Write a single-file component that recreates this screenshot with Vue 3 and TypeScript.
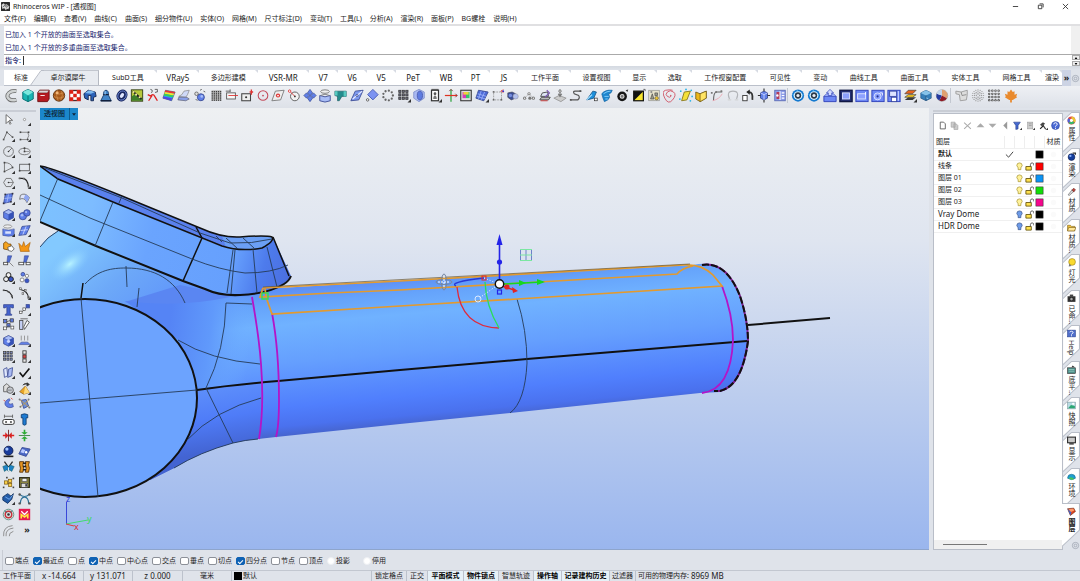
<script setup lang="ts">
import { ref } from 'vue'

interface Tab { label: string; size: number; active?: boolean }
interface Layer { name: string; color: string; current?: boolean; lamp?: 'on' | 'off' }
interface Snap { label: string; on: boolean; round?: boolean }
interface Cell { label: string; size: number; on?: boolean }

const K = '#333'
const B = '#5f7fe8'
const D = '#3a4a92'
const L = '#a9bdf6'

const P = (d: string, fill = 'none', stroke = 'none', w = 1) =>
  `<path d="${d}" fill="${fill}" stroke="${stroke}" stroke-width="${w}"/>`
const C = (x: number, y: number, r: number, fill = 'none', stroke = 'none', w = 1) =>
  `<circle cx="${x}" cy="${y}" r="${r}" fill="${fill}" stroke="${stroke}" stroke-width="${w}"/>`
const R = (x: number, y: number, w: number, h: number, fill = 'none', stroke = 'none', sw = 1) =>
  `<rect x="${x}" y="${y}" width="${w}" height="${h}" fill="${fill}" stroke="${stroke}" stroke-width="${sw}"/>`
const dots = (pts: number[][], r: number, fill: string) => pts.map(([x, y]) => C(x, y, r, fill)).join('')
const boxes = (pts: number[][], s: number, fill: string, stroke = 'none') => pts.map(([x, y]) => R(x, y, s, s, fill, stroke, 0.8)).join('')
const lattice = (from: number, step: number, n: number) => {
  const out: number[][] = []
  for (let i = 0; i < n; i++) for (let j = 0; j < n; j++) out.push([from + i * step, from + j * step])
  return out
}
const ring = (n: number, r: number) => Array.from({ length: n }, (_, i) => [8 + r * Math.cos((i * 2 * Math.PI) / n), 8 + r * Math.sin((i * 2 * Math.PI) / n)])
const more = P('M16 12v4h-4z', K)
const cube = P('M2 5l6-3 6 3v7l-6 3-6-3z', B, D) + P('M2 5l6 3 6-3-6-3z', L, D, 0.6) + P('M8 8v7l6-3V5z', '#3552b8')
const gear = C(8, 8, 7, '#1479cf') + C(8, 8, 5, '#d9f0ff') + C(8, 8, 3.6, '#2b3948') + C(8, 8, 1.8, '#e8eef5') + P('M2 7l2 1M12 8l2-1M7 2l1 2', 'none', '#7ed1ff')
const panel = R(1, 2, 14, 13, '#6d87f4', '#2a3db8')

const mainIcons: [string, string][] = [
  ['管', P('M13 3C5 2 2 7 3 10c2 4 6 4 10 3', 'none', '#666', 4.5) + P('M13 3C5 2 2 7 3 10c2 4 6 4 10 3', 'none', '#cfd2d2', 2.8)],
  ['多面体', P('M8 1l6 3v8l-6 3-6-3V4z', '#19b5b2', '#06686d') + P('M2 4l6 4 6-4-6-3z', '#7be8dd') + P('M8 8v7', 'none', '#06686d')],
  ['工具箱', P('M2 5l2-3h11v10l-2 3H2z', '#b51a20', '#6d1013') + P('M2 5l2-3h11l-2 3z', '#d9d9d9', '#6d1013', 0.6) + P('M5 8h5', 'none', '#fff')],
  ['球', C(8, 8, 6.5, '#a85a1c', '#5a2f0b') + P('M3 5q5 3 10 0M2 9q6 4 12 0M6 2q-2 6 1 12M11 3q2 5-1 10', 'none', '#dd9a58', 0.7) + C(6, 5, 1.6, '#f2b77a')],
  ['棋盘', R(2, 2, 12, 12, '#fff', '#a00') + boxes([[2, 2], [10, 2], [6, 6], [2, 10], [10, 10]], 4, '#dc1f12') + R(6, 2, 4, 1, '#222') + R(6, 13, 4, 1, '#222')],
  ['块面', P('M1 6l5-4 8 2 1 5-3 1v4H9V8H6v5l-4-2z', '#2b62b8', '#14254f') + P('M2 5l5-3 7 2-5 2z', '#7fbaf0')],
  ['锥体', P('M5 8q0-6 3-6t3 6l3 6H2z', '#4285c8', '#173b6c') + P('M5 7h6M2 14h12', 'none', '#0f1f3d', 1.6) + P('M7 3v4', 'none', '#b5dcff')],
  ['圆环', '<g transform="rotate(35 8 8)"><ellipse cx="8" cy="8" rx="4" ry="5" fill="#dfe6ff" stroke="#1a2860" stroke-width="4"/><ellipse cx="8" cy="8" rx="4.500" ry="5.500" fill="none" stroke="#6f8ad6"/></g>'],
  ['纹理', R(1.5, 1.5, 13, 13, '#b6c83b', '#2d3a10') + P('M2 9l4-3 5 4 3 1v3H2z', '#3f7f2b') + P('M3 3l10 9', 'none', '#222', 2) + dots([[4, 4], [7, 7], [11, 10]], 1.2, '#f5ef9b')],
  ['修剪', P('M5 9q3-4 5 0l3 5M7 8l-4 6M2 7l4 2', 'none', '#d22', 1.5) + P('M5 1q3 0 2 3l-1 1M10 1h3v3h-2v1', 'none', '#555')],
  ['彩色', P('M4 2l11 2-4 10L1 11z', '#21a0ff', '#444', 0.6) + P('M4 2l11 2-1 2L3 4z', '#e33') + P('M3 4l11 2-1 2L3 6z', '#f7e52b') + P('M2.5 6L13 8l-1 2-10-2z', '#3bd14d') + P('M1.5 9l10 2-1 3L1 11z', '#5546e0')],
  ['曲面', P('M2 9q4-1 6-6l6-1q-2 6-4 8z', '#cfd9f8', '#777', 0.7) + P('M2 10h8q2 0 4 2l-4 2-9-1z', '#8aa0e8', '#556', 0.7)],
  ['联集', C(9, 10, 4, B, D) + C(4, 6, 2, '#ddd', '#666') + P('M8 2l2-1M12 3l2 1M3 12l2 2', 'none', '#555') + C(10, 9, 1.5, L)],
  ['网点', R(3, 2, 11, 12, '#bbb') + boxes(lattice(3, 2.4, 5), 1.4, '#2c2c2c')],
  ['标尺', R(3, 5, 10, 7, '#f7f7f7', '#555') + P('M5 8h11', 'none', '#d33') + P('M2 3h5M7 1v3', 'none', '#555')],
  ['拉伸', R(2, 6, 10, 8, '#eee', '#444', 1.2) + C(7, 10, 1.2, '#333') + P('M13 1v6M11 4h4', 'none', '#d33', 1.5)],
  ['圆', C(8, 8, 5.5, 'none', '#c34a5a', 1.2) + C(8, 8, 1, '#c34a5a')],
  ['菱形', P('M5 3l10-1-4 11-10 1z', '#eee', '#777') + C(8, 8, 2.4, '#d33') + C(8, 8, 1, '#fff')],
  ['半径', C(9, 9, 5, '#f2f2f2', '#555') + P('M3 3l6 6', 'none', '#d33') + C(3, 3, 1.4, '#fff', '#d33') + C(9, 9, 1, '#333')],
  ['阵列', P('M8 1l3 4-3 3-3-3zM8 8l3 3-3 4-3-4zM4 5l3 3-3 3-3-3zM12 5l3 3-3 3-3-3z', B, D, 0.8)],
  ['放样', P('M2 8v6q6 3 12 0V8q-6 3-12 0z', L, D) + '<ellipse cx="8" cy="3.500" rx="5" ry="2" fill="#eee" stroke="#777"/>' + P('M3 8q5-3 10 0', 'none', '#777')],
  ['接管', P('M1 3h13v6H9l-3 5H4V9L1 8z', '#258c8d', '#0b4850', 0.6) + P('M1 3h3v5H1zM11 3h3v6h-3z', '#58c9c0')],
  ['平面', P('M6 3l9-1-5 11-9 1z', '#7f9bf0', D) + P('M3 12L14 3', 'none', '#eef', 1.2) + C(8, 8, 1.2, '#fff', D)],
  ['旋转面', P('M9 1l6 6-6 6-6-6z', '#7c93f2', '#4357b0') + C(3, 13, 1.4, '#fff', '#555')],
  ['环形阵列', dots(ring(9, 5.6), 1.3, '#666')],
  ['矩形阵列', boxes([[2, 2], [6, 2], [10, 2], [2, 6], [6, 6], [10, 6], [2, 10], [6, 10], [10, 10]], 2.6, '#667', '#333') + more],
  ['圆柱', P('M2 4l6-3 6 3v7l-6 4-6-4z', '#a9b9f2', '#8494cc') + '<ellipse cx="9" cy="8" rx="3" ry="5" fill="#5e7be0" stroke="#4a5cae"/>'],
  ['人台', R(4, 2, 8, 12, '#fff', '#333', 1.4) + C(8, 6, 1.6, '#555') + P('M6 12q0-4 2-4t2 4z', '#777') + P('M4 1h8', 'none', '#444') + more],
  ['坐标轴', P('M8 1v14', 'none', '#2aa13a', 1.4) + P('M1 8h14', 'none', '#d32', 1.4) + P('M6 3l2-2 2 2M13 6l2 2-2 2', 'none', '#733')],
  ['显示器', R(2, 2, 12, 12, '#ddd', '#333', 1.2) + R(4, 4, 4, 7, '#d63ab8') + R(8, 4, 4, 7, '#31c56b') + R(5, 4, 6, 3, '#f0d23a')],
  ['网格面', P('M4 2l11 2-5 10-9-3z', '#4e6bd8', D) + P('M3 6l10 3M2 9l10 3M7 3L4 12M11 4L7 13', 'none', '#a7bbff', 0.8) + more],
  ['控制点', '<path d="M3 4h9v9H3z" fill="none" stroke="#999" stroke-dasharray="2 1"/>' + boxes([[2, 3], [2, 12], [11, 12]], 1.8, '#666') + P('M11 4l3-3M12 2l2 3', 'none', '#d33') + C(14, 3, 1, '#33c')],
  ['渐变体', P('M2 5l5-1 4 2v5l-5 2-4-3z', '#3c4f97', '#445', 0.7) + C(11, 9, 3, '#b4c2ef', '#99a', 0.7) + C(5, 8, 2, '#768de0')],
  ['节点', P('M2 12l6-6 5 5', 'none', '#bbb') + dots([[3, 11], [8, 6], [13, 11], [9, 11]], 1.8, '#777') + dots([[3, 11], [8, 6], [13, 11]], 0.8, '#fff')],
  ['图层笔', P('M2 13h10l2-3H4z', '#bbb', '#444') + P('M3 9h9l-1-5-6 1z', '#dfe6f5', '#444') + P('M3 14h8', 'none', '#c33') + P('M10 2l3 3-5 5', 'none', '#7a5ab0', 1.4)],
  ['投影', P('M1 11l6-3 8 3-6 4z', '#ccc', '#999') + P('M8 1v7M6 6l2 3 2-3', 'none', '#777', 1.3) + C(8, 3, 1.4, '#ddd', '#777')],
  ['曲线', P('M14 3H7Q4 3 6 6l5 2q2 3-1 5H2', 'none', '#555', 1.4) + boxes([[12, 2], [1, 12]], 2, '#555')],
  ['斜管', P('M2 13l7-10 4 1-3 7z', '#1c90dc', '#1a5b8e') + P('M2 13l6-6', 'none', '#a6e0ff', 1.4) + boxes([[11, 11]], 3, '#fff', '#333')],
  ['螺旋面', P('M2 6q4-5 12-4-1 4-4 4l1 4-2 3-4 2-2-5z', '#1d86ce', '#14609d', 0.7) + P('M4 6q4-3 8-3M5 9h5M6 12h3', 'none', '#8bd4ff')],
  ['黑球', C(7, 9, 5.5, '#151515') + C(7, 9, 2.2, '#777', '#ddd', 1.2) + P('M11 2l3-1-1 3z', '#333')],
  ['明暗', R(2, 3, 11, 11, '#f8e52e', '#111', 1.4) + P('M2 14V3h11z', '#111') + P('M13 1h2v2', 'none', '#555')],
  ['群组', R(2, 2, 12, 12, '#e6e2cc', '#888', 0.7) + P('M4 12l2-6 2 6zM9 5h3v3H9z', '#9a9a8c', '#444', 0.7) + C(11, 11, 2, '#eec332', '#554', 0.7) + C(5, 4, 1.2, '#888')],
  ['螺旋线', P('M8 8q2-1 1 1t-4 0 0-5 7 0-1 9-9-2 1-9 8 0', 'none', '#cf4f60')],
  ['黄平面', P('M6 4l7-1-4 10-6 1z', '#f5e13a', '#86761c') + dots([[2, 3], [14, 2], [15, 9], [1, 12], [13, 14], [8, 1]], 1, '#27b4e8')],
  ['黄盒', P('M2 4l5 2 7-3v8l-7 4-5-3z', '#edb719', '#5d4708', 0.8) + P('M7 6v9l7-4V3z', '#ffe463', '#5d4708', 0.7)],
  ['延伸曲线', P('M4 14q0-9 3-10h7', 'none', '#666', 1.2) + P('M3 14q8-2 11-8', 'none', '#eaa6b0') + boxes([[1, 4], [12, 2], [6, 3]], 2, '#777')],
  ['圆弧', P('M4 12Q0 3 8 3t4 9', 'none', '#b2b4b8', 1.2) + P('M2 13h4M10 13h4', 'none', '#ccc')],
  ['回转', P('M9 4q5 0 4 9', 'none', '#333', 2) + P('M10 1v6L6 4z', '#222') + R(2, 8, 5, 6, '#fff', '#333')],
  ['移动体', P('M4 5l4-2 4 2v6l-4 2-4-2z', B, D) + P('M4 5l4 2 4-2M8 7v6', 'none', '#cad5ff') + P('M8 0v3M1 8h3M12 8h3M8 13v3', 'none', '#333', 1.3)],
  ['反转', R(2, 2, 12, 12, '#8d9eea', '#5a6ab4') + R(4, 4, 4, 8, '#b33b5b') + P('M8 3v10M10 5h3M10 8h3M10 11h3', 'none', '#fff', 1.2) + C(5, 8, 1.4, '#fff')],
]
const bodyIcons: [string, string][] = [
  ['设定', gear], ['选项', gear],
  ['挤出', P('M1 9h14v6H1z', '#6d87f4', '#2a3db8') + P('M1 9l3-3h8l3 3z', '#a7b8fc', '#2a3db8', 0.7) + P('M8 1l4 4h-2v3H6V5H4z', '#d3dbff', '#2a3db8', 0.8)],
  ['框', R(1, 2, 14, 13, '#232f72', '#101744', 1.5) + R(4, 5, 8, 7, '#8ca0fb', '#dde4ff')],
  ['槽', panel + R(3, 6, 9, 6, '#8da1ff', '#e2e8ff') + P('M12 4v3', 'none', '#fff')],
  ['孔', panel + C(7.5, 9, 4, '#8da1ff', '#e2e8ff') + C(7.5, 9, 1.2, '#25338d') + P('M10 5h3v3', 'none', '#fff')],
  ['保存', panel + R(3, 3, 8, 6, '#dce3ff', '#3646a2') + R(5, 10, 6, 5, '#fff', '#3646a2') + P('M13 3v11', 'none', '#dce3ff')],
  ['堆叠', P('M2 13h9l4-3H6z', '#3c3c3c') + P('M2 10h9l4-3H6z', '#f4c521', '#333', 0.7) + P('M2 6h9l4-4H6z', '#e7621d', '#333', 0.7) + more],
  ['晶体', P('M8 2l6 3v6l-6 3-6-3V5z', '#367eb9', '#25527d', 0.7) + P('M2 5l6 3 6-3-6-3zM8 9l3 3H8z', '#86c2e9') + P('M8 8v6', 'none', '#25527d')],
  ['色球', C(8, 8, 6.5, '#f4f4f4', '#777', 0.6) + P('M8 8L8 1.5A6.5 6.5 0 0 1 13.6 11z', '#e0a070') + P('M8 8l5.6 3A6.5 6.5 0 0 1 5 13.8z', '#8e1b26') + P('M8 8L5 13.8A6.5 6.5 0 0 1 2 6z', '#253ba0') + P('M8 8L2 6a6.5 6.5 0 0 1 6-4.5z', '#c3d6ec')],
]
const extraIcons: [string, string][] = [
  ['展平', P('M1 3l6 1 7-2v5l-1 6-7 1-1-7-4-1z', '#ddd', '#999') + P('M7 4l1 4 5-1', 'none', '#888')],
  ['点云', dots(ring(16, 6.4), 0.7, '#999') + dots(ring(12, 4.2), 0.7, '#888') + dots(ring(6, 2), 0.7, '#888')],
  ['点格', dots(lattice(2.5, 3.6, 4), 1.35, '#555') + dots(lattice(2.5, 3.6, 4), 0.5, '#fff')],
  ['枫叶', P('M8 1l2 3 2-1v4l3-1-1 3 1 1-5 3H9v3H7v-3H6l-5-3 1-1-1-3 3 1V3l2 1z', '#e98a2d')],
]

const sideIcons: [string, string][] = [
  ['选取', P('M5 2v11l3-3 2 4 1-1-2-4h4z', '#fff', '#555')],
  ['点', C(8, 8, 1.4, '#fff', '#888') + more],
  ['多重直线', P('M2 13L6 4l7 6', 'none', '#555') + boxes([[1, 12], [5, 3], [12, 9]], 2, '#555') + more],
  ['控制点曲线', P('M3 4h9q3 4-1 9H3', 'none', '#777') + boxes([[2, 3], [12, 3], [2, 12], [11, 12]], 2, '#444') + more],
  ['圆', C(8, 8, 6, 'none', '#666') + P('M8 8l4-4', 'none', '#555') + C(8, 8, 1, '#333') + more],
  ['椭圆', '<ellipse cx="8" cy="8" rx="7" ry="4" fill="none" stroke="#666"/>' + P('M8 3v5h6', 'none', '#888') + boxes([[7, 3], [7, 7]], 2, '#444') + more],
  ['圆弧', P('M3 2v11l10-5M3 2q8 0 10 6', 'none', '#666') + boxes([[2, 1], [2, 12], [12, 7]], 2, '#444') + more],
  ['矩形', R(2, 4, 12, 8, 'none', '#555') + boxes([[1, 11], [13, 3]], 2, '#444') + more],
  ['多边形', P('M5 3h6l3 5-3 5H5L2 8z', 'none', '#666') + P('M8 8h6', 'none', '#777') + C(8, 8, 1, '#333') + more],
  ['圆角', P('M1 3h4q7 0 8 11', 'none', '#222', 1.5) + boxes([[1, 2], [6, 2], [12, 12]], 2, '#666') + more],
  ['曲面', P('M4 3l9-1-2 10-9 2z', B, D) + P('M3 8l9-1M8 3L6 13', 'none', L) + boxes([[3, 2], [12, 1], [1, 13], [10, 11]], 2, '#334') + more],
  ['弯曲面', P('M3 4q6-4 11 3l-3 6Q8 6 2 9z', '#dfe5f8', '#666') + P('M9 3q4 1 5 4l-3 6Q10 9 7 8z', '#8fa6f1') + more],
  ['立方体', cube + more],
  ['球体', C(6, 10, 4.5, B, D) + C(11, 6, 4, '#5672dc', D) + C(5, 9, 1.6, L) + C(10, 5, 1.4, L) + more],
  ['管状', P('M1 6v8q7 2 14 0V6q-7 3-14 0z', B, D, 0.7) + '<ellipse cx="7" cy="3" rx="5" ry="2" fill="#eee" stroke="#888"/>' + P('M4 9h7v3H4z', '#dbe3fd') + more],
  ['网格', P('M5 3l10-1-5 11-9 1z', B, D) + P('M3 8l9-1M10 3L6 13', 'none', '#d6dfff') + more],
  ['布尔', P('M2 4l3-2 3 3h3v4l-4 3-5-1z', '#f5a31e', '#7b4c0a') + P('M7 9l5-2 3 4-3 3-4-1z', '#fff', '#555')],
  ['爆炸', P('M1 4l4 4 2-6 2 6 6-5-2 8 1 3H3z', '#f59615', '#a8650f', 0.8)],
  ['修剪', P('M7 1h5l-3 8H6z', '#4c6bd5', D, 0.7) + R(2, 9, 5, 3, '#fff', '#444') + P('M9 9l5 5', 'none', '#777')],
  ['分割', P('M8 1h5l-3 8H7z', '#4c6bd5', D, 0.7) + R(1, 9, 6, 3, '#fff', '#444') + R(10, 9, 5, 3, '#fff', '#444')],
  ['交集', C(8, 5, 3, '#eee', '#222', 1.2) + C(5, 10, 3, '#eee', '#222', 1.2) + C(11, 10, 3, '#3955c5', '#222', 1.2) + more],
  ['三点', C(6, 4, 2.3, B, D) + C(11, 6, 2, '#fff', '#777') + C(5, 11, 2.4, '#fff', '#777') + C(11, 12, 2.5, '#3955c5', D)],
  ['曲线端点', P('M2 4q9 0 11 10', 'none', '#222', 1.4) + boxes([[1, 3], [7, 5], [11, 10]], 2, '#555')],
  ['编辑点', P('M3 3q9 2 10 10', 'none', '#222', 1.4) + boxes([[2, 1], [8, 3], [5, 7], [12, 12]], 2, '#fff', '#555') + more],
  ['文字', P('M2 2h12v4h-2l-1-1h-1v8l2 1v1H4v-1l2-1V5H5L4 6H2z', '#4463cf', D)],
  ['移动点', P('M4 12l6-6', 'none', '#777') + boxes([[2, 10], [6, 6]], 3, '#fff', '#444') + R(10, 2, 4, 4, '#3955c5', D) + more],
  ['散布', boxes([[2, 2], [10, 1], [6, 7]], 4, '#5c78dd', '#333') + boxes([[2, 11], [11, 10]], 3.5, '#fff', '#444') + P('M5 5l5-2M5 12l4-3', 'none', '#555')],
  ['旋转', R(2, 3, 4, 11, '#c5d0f5', '#444') + P('M8 14l6-9-3-2-4 8z', '#fff', '#444') + P('M3 1h9', 'none', '#555')],
  ['盒体', cube + C(8, 9, 2, '#c9d5ff') + more],
  ['投射', P('M1 13h14l-3-3H4z', B, D, 0.7) + P('M4 2v6M8 2v6M12 2v6', 'none', '#888') + more],
  ['矩阵', boxes([[2, 2], [6, 2], [10, 2], [2, 6], [6, 6], [10, 6], [2, 10], [6, 10], [10, 10]], 2.6, '#8090c8', '#333') + more],
  ['对齐', R(6, 1, 4, 4, '#e8e8e8', '#333') + R(6, 6, 4, 4, '#d44', '#333') + R(6, 11, 4, 4, '#e8e8e8', '#333') + more],
  ['偏移', P('M2 4l4-2 1 10-4 2z', '#dfe6fc', D) + P('M8 4l5-2-1 10-5 2z', '#a9baf3', D) + more],
  ['检查', P('M2 8l4 5L14 3', 'none', '#111', 2) + more],
  ['组合', P('M2 12V5l4-3 3 3v7z', '#ddd', '#555') + C(10, 10, 4, '#c4c8cf', '#555') + P('M7 10h5', 'none', '#777') + more],
  ['金字塔', P('M2 12l7-7 5 8-7 2z', '#e8a527', '#70450c', 0.7) + P('M9 5l5 8-7 2z', '#ffd978') + P('M6 4q1-3 6-2M11 1l3 2-3 2z', '#333', '#333') + more],
  ['弯曲', P('M9 2q-7 3-5 8 4 5 10 2l-1-4q-4 2-5-1 0-2 2-3z', B, D, 0.8) + P('M11 1l2 2M2 4l2 1', 'none', '#c33')],
  ['包络', P('M4 4l6-1 3 8-6 3z', '#6e90d7', D) + P('M2 3l12 10M3 12l10-8', 'none', '#c69a3d') + dots([[2, 3], [14, 13], [3, 12], [13, 3]], 1.2, '#777')],
  ['尺寸', P('M3 2v4M13 2v4M3 4h10', 'none', '#555') + '<rect x="1" y="8" width="14" height="6" rx="2" fill="#fff" stroke="#333" stroke-width="1.200"/>' + dots([[5, 11], [11, 11]], 1.3, '#555')],
  ['螺钉', P('M4 2q4-2 8 0v4h-2v8l-2 1-2-1V6H4z', '#1e7bd2', '#103b6d')],
  ['水平翻转', P('M1 7h3V4l4 4-4 4V9H1zM15 7h-3V4L8 8l4 4V9h3z', '#da2020') + P('M8 1v14', 'none', '#611')],
  ['垂直翻转', P('M7 1h2v3h3L8 7 4 4h3zM7 15h2v-3h3L8 9l-4 3h3z', '#2bab32') + P('M1 8h14', 'none', '#2b7a32')],
  ['渲染', C(8, 7, 5.5, '#173b9b', '#0a1648') + C(6, 5, 2, '#a6c6ff') + P('M2 14h12', 'none', '#222', 2)],
  ['贴图', P('M5 3l10 2-5 9-9-3z', '#4967c4', D) + P('M5 5l4 1-2 4-4-1z', '#b7c8ff') + C(10, 9, 1.5, '#fff')],
  ['剪切', P('M3 2l5 7M13 2L8 9', 'none', '#333', 1.6) + P('M1 8l5-2 2 3 2-3 5 2-3 6-3-2-1 2-2-2-3 2z', '#1e82c4', '#155', 0.6) + P('M8 9v5', 'none', '#fff')],
  ['缝合', P('M2 2h5l-1 4 1 4-1 5H2l1-5-1-4zM9 2h5l-1 4 1 4-1 5H9l1-5-1-4z', '#e49421', '#4d2a04') + P('M6 4h4M6 8h4M6 12h4', 'none', '#222', 1.6)],
  ['炸点', boxes([[3, 6], [8, 4], [8, 9]], 4, '#fbd24a', '#755107') + boxes([[1, 13], [5, 1], [13, 2], [13, 13]], 2, '#444')],
  ['存档', R(2, 2, 12, 12, '#8c8540', '#2c2a14', 1.4) + R(5, 3, 6, 4, '#eee', '#333', 0.7) + R(4, 9, 8, 5, '#ddd', '#333', 0.7) + R(9, 10, 2, 3, '#333')],
  ['折面', P('M1 6l6-4 4 3 3-3-2 7-5 5-6-4z', '#245ca7', '#12305d') + P('M4 6l5 3 4-5', 'none', '#7db7ff') + more],
  ['桥接', P('M2 3q6 5 12 0M3 14q0-7 5-8 5 1 5 8', 'none', '#2b7197', 1.3) + dots([[2, 3], [14, 3], [2, 14], [14, 14]], 1.5, '#555')],
  ['靶心', C(8, 8, 6.5, '#d8e5e5', '#587') + C(8, 8, 4, 'none', '#c8333b', 1.8) + C(8, 8, 1.6, '#333') + P('M3 3l3 3M13 3l-3 3', 'none', '#478')],
  ['插件', R(1, 1, 14, 14, '#e41850') + P('M4 13V8l4 3 4-3v5', 'none', '#ffe73c', 2) + P('M4 4l4 4 4-4', 'none', '#fff', 1.6)],
  ['同心弧', P('M2 15Q1 3 13 2M5 15Q4 6 14 5M9 15q-1-4 5-6', 'none', '#888', 1.1)],
]

const layerTools: [string, string][] = [
  ['新建', P('M4 2h6l3 3v9H4z', '#fff', '#555', 1.5)],
  ['复制', P('M2 2h7v9H2zM7 5h4l3 3v7H7z', '#ccc', '#999')],
  ['删除', P('M2 3l12 11M14 3L2 14', 'none', '#aaa', 1.8)],
  ['上移', P('M8 4l7 7H1z', '#aaa')],
  ['下移', P('M8 12l7-7H1z', '#aaa')],
  ['左移', P('M4 8l7-7v14z', '#999')],
  ['过滤', P('M1 2h12L9 8v6l-4 1V8z', '#4568ce', '#223d89') + more],
  ['报告', R(3, 2, 9, 12, '#ccc', '#999') + P('M5 5h5M5 8h5', 'none', '#888') + more],
  ['工具', P('M2 6l5-4 4 3-3 2 5 7-2 1-5-7-2 1z', '#444') + P('M8 8l-6 6', 'none', '#222', 2) + more],
  ['帮助', C(8, 8, 7, '#4968d4', '#2a439b') + P('M5 6q0-3 3-3t3 3q0 1-3 3v1M8 12v2', 'none', '#fff', 1.7)],
]

const sideTabs: { label: string; icon: string; active?: boolean }[] = [
  { label: '属性', icon: C(8, 8, 5, 'none', '#e24a4a', 4) + P('M8 3a5 5 0 0 1 4.4 7.4', 'none', '#e8ca2f', 4) + P('M12 10.5A5 5 0 0 1 4 11', 'none', '#38b768', 4) + P('M4 11A5 5 0 0 1 4 5', 'none', '#4a67da', 4) },
  { label: '渲染', icon: C(8, 9, 6, '#163e9c', '#081744') + C(6, 7, 2, '#8ab2ff') + P('M10 2h5v3', 'none', '#333', 2) },
  { label: '材质', icon: P('M2 14l7-9 3 3-8 7z', '#ddd', '#555') + P('M9 5l3-3 3 3-3 4z', '#b94037', '#622') },
  { label: '材质…', icon: P('M1 4h5l2 2h6v8H1z', '#eebf37', '#76580e') + P('M3 8h13l-3 6H1z', '#ffe79a', '#76580e') },
  { label: '灯光', icon: C(9, 7, 6, '#f9d92e', '#92771a') + P('M4 10l4 4-5 1z', '#777') },
  { label: '已命…', icon: R(1, 4, 14, 10, '#333') + R(5, 1, 6, 4, '#444') + C(8, 9, 3, '#aaa', '#111') },
  { label: 'Help', icon: R(1, 2, 14, 12, '#4f6ecb', '#273e8d') + P('M5 6q0-2 3-2t3 3l-3 2v1M8 11v2', 'none', '#fff', 1.5) },
  { label: '底平…', icon: R(1, 5, 14, 10, '#4c8e88', '#222') + P('M3 8h10M3 11h10', 'none', '#b4e7dc') + P('M10 1l4 3h-6z', '#333') },
  { label: '快照', icon: R(1, 2, 14, 12, '#b9dbe4', '#7b969d') + P('M2 13l5-6 7 2v4z', '#2ca774') + C(11, 5, 2, '#fff') },
  { label: '显示', icon: R(1, 2, 14, 10, '#c9c9c9', '#333', 2) + P('M4 14h8', 'none', '#333', 2.5) },
  { label: '环境', icon: P('M1 11a7 7 0 0 1 14 0q-7 5-14 0z', '#1e9fd0', '#166689') + P('M3 11q5-4 10 2-5 2-10-2z', '#48c657') },
  { label: '图层', active: true, icon: P('M1 3l11-1 3 6-9 7z', '#de421b', '#65210b') + P('M1 3l5 12 2-6z', '#4466c5') + P('M3 4l8-1 2 3-6 3z', '#ff9a6a') },
]

const menus = ['文件(F)', '编辑(E)', '查看(V)', '曲线(C)', '曲面(S)', '细分物件(U)', '实体(O)', '网格(M)', '尺寸标注(D)', '变动(T)', '工具(L)', '分析(A)', '渲染(R)', '面板(P)', 'BG螺栓', '说明(H)']

const tabs: Tab[] = [
  { label: '标准', size: 34 }, { label: '卓尔谟犀牛', size: 60, active: true }, { label: 'SubD工具', size: 58 }, { label: 'VRay5', size: 42 },
  { label: '多边形建模', size: 59 }, { label: 'VSR-MR', size: 51 }, { label: 'V7', size: 29 }, { label: 'V6', size: 29 }, { label: 'V5', size: 29 },
  { label: 'PeT', size: 35 }, { label: 'WB', size: 31 }, { label: 'PT', size: 28 }, { label: 'JS', size: 29 }, { label: '工作平面', size: 53 },
  { label: '设置视图', size: 50 }, { label: '显示', size: 36 }, { label: '选取', size: 35 }, { label: '工作视窗配置', size: 66 }, { label: '可见性', size: 44 },
  { label: '变动', size: 36 }, { label: '曲线工具', size: 51 }, { label: '曲面工具', size: 51 }, { label: '实体工具', size: 51 }, { label: '网格工具', size: 51 },
  { label: '渲染', size: 20 },
]

const layers: Layer[] = [
  { name: '默认', color: '#000000', current: true },
  { name: '线条', color: '#ff0000', lamp: 'on' },
  { name: '图层 01', color: '#0a93f5', lamp: 'on' },
  { name: '图层 02', color: '#14dc0a', lamp: 'on' },
  { name: '图层 03', color: '#f5058c', lamp: 'on' },
  { name: 'Vray Dome', color: '#000000', lamp: 'off' },
  { name: 'HDR Dome', color: '#000000', lamp: 'off' },
]

const snaps = ref<Snap[]>([
  { label: '端点', on: false }, { label: '最近点', on: true }, { label: '点', on: false }, { label: '中点', on: true },
  { label: '中心点', on: false }, { label: '交点', on: false }, { label: '垂点', on: false }, { label: '切点', on: false },
  { label: '四分点', on: true }, { label: '节点', on: false }, { label: '顶点', on: false },
  { label: '投影', on: false, round: true }, { label: '停用', on: false, round: true },
])

const readouts: Cell[] = [
  { label: '工作平面', size: 35 }, { label: 'x -14.664', size: 49 }, { label: 'y 131.071', size: 49 }, { label: 'z 0.000', size: 50 }, { label: '毫米', size: 49 },
]
const toggles: Cell[] = [
  { label: '锁定格点', size: 35 }, { label: '正交', size: 21 }, { label: '平面模式', size: 36, on: true }, { label: '物件锁点', size: 35, on: true },
  { label: '智慧轨迹', size: 35 }, { label: '操作轴', size: 28, on: true }, { label: '记录建构历史', size: 48, on: true }, { label: '过滤器', size: 26 },
]

const isLatin = (s: string) => /^[\x00-\x7f]+$/.test(s)
const command = ref('')
</script>

<template>
  <div class="app">
    <header class="title">
      <svg class="logo" viewBox="0 0 16 16"><rect width="16" height="16" rx="1" fill="#2b2b2b" /><path d="M1 5l4-3 2 3 3-1 5 4-2 5-3-1-1 3-3-4-4 1z" fill="#d8d8d8" /><path d="M3 9l4-3 3 4M8 6l5 2" stroke="#222" fill="none" /></svg>
      <h1>Rhinoceros WIP - [透视图]</h1>
      <div class="window-buttons">
        <button aria-label="最小化"><svg viewBox="0 0 8 8"><path d="M1 4h6" /></svg></button>
        <button aria-label="还原"><svg viewBox="0 0 8 8"><path d="M1.500 2.500h4v4h-4zM3 1h4v4" /></svg></button>
        <button aria-label="关闭"><svg viewBox="0 0 8 8"><path d="M1 1l6 6M7 1L1 7" /></svg></button>
      </div>
    </header>
    <nav class="menu"><button v-for="m in menus" :key="m">{{ m }}</button></nav>

    <section class="command">
      <div class="history">
        <p>已加入 1 个开放的曲面至选取集合。</p>
        <p>已加入 1 个开放的多重曲面至选取集合。</p>
      </div>
      <div class="prompt">
        <label for="cmd">指令:</label>
        <input id="cmd" v-model="command" type="text" autocomplete="off">
        <div class="spin"><button aria-label="上一条"><svg viewBox="0 0 4 3"><path d="M2 0l2 3H0z" /></svg></button><button aria-label="下一条"><svg viewBox="0 0 4 3"><path d="M2 3l2-3H0z" /></svg></button></div>
      </div>
    </section>

    <div class="tabbar">
      <div class="tabs" role="tablist">
        <button v-for="t in tabs" :key="t.label" role="tab" class="tab" :class="{ active: t.active, latin: isLatin(t.label) }" :style="{ flexGrow: t.size }">
          <svg v-if="t.active" class="slant" viewBox="0 0 14 16" preserveAspectRatio="none"><path class="blank" d="M0 0H14V16H0z" /><path class="fill" d="M0 16L11 1H14V16z" /><path class="edge" d="M0 16L11 .5H14" /></svg>
          <span>{{ t.label }}</span>
        </button>
      </div>
      <button class="overflow" aria-label="更多">»</button>
      <button class="gear" aria-label="设置"><svg viewBox="0 0 10 10"><circle cx="5" cy="5" r="3.500" /><circle cx="5" cy="5" r="1.500" /></svg></button>
    </div>

    <div class="toolbar" role="toolbar">
      <div class="group group-main"><button v-for="i in mainIcons" :key="i[0]" :aria-label="i[0]"><svg viewBox="0 0 16 16" v-html="i[1]" /></button></div>
      <div class="group group-body"><button v-for="i in bodyIcons" :key="i[0]" :aria-label="i[0]"><svg viewBox="0 0 16 16" v-html="i[1]" /></button></div>
      <div class="group group-extra"><button v-for="i in extraIcons" :key="i[0]" :aria-label="i[0]"><svg viewBox="0 0 16 16" v-html="i[1]" /></button></div>
    </div>

    <main class="workspace">
      <aside class="side">
        <div class="grip" />
        <div class="palette">
          <button v-for="i in sideIcons" :key="i[0]" :aria-label="i[0]"><svg viewBox="0 0 16 16" v-html="i[1]" /></button>
          <button class="next" aria-label="更多工具">»</button>
        </div>
      </aside>

      <section class="view">
        <svg class="scene" viewBox="40 108 889 441" preserveAspectRatio="xMidYMid slice" role="img" aria-label="模型">
          <defs>
            <linearGradient id="sky" x1="0" y1="0" x2="0" y2="1">
              <stop offset="0" stop-color="#eef0f2" /><stop offset=".3" stop-color="#dfe5f0" /><stop offset=".65" stop-color="#bccdee" /><stop offset="1" stop-color="#9ab6ee" />
            </linearGradient>
            <linearGradient id="tube" gradientUnits="userSpaceOnUse" x1="390" y1="280" x2="403" y2="426">
              <stop offset="0" stop-color="#5d8ff6" /><stop offset=".1" stop-color="#65a3fb" /><stop offset=".24" stop-color="#70b2ff" /><stop offset=".5" stop-color="#659ffe" /><stop offset=".8" stop-color="#507ffd" /><stop offset=".93" stop-color="#4a71ee" /><stop offset="1" stop-color="#4664cd" />
            </linearGradient>
            <linearGradient id="slab" gradientUnits="userSpaceOnUse" x1="40" y1="200" x2="290" y2="270">
              <stop offset="0" stop-color="#7cc2ff" /><stop offset=".2" stop-color="#7dbcff" /><stop offset=".45" stop-color="#6aa4fe" /><stop offset=".78" stop-color="#66a0fd" /><stop offset=".9" stop-color="#4d7bec" /><stop offset="1" stop-color="#4b6fe0" />
            </linearGradient>
            <linearGradient id="hub" gradientUnits="userSpaceOnUse" x1="70" y1="240" x2="150" y2="330">
              <stop offset="0" stop-color="#83c9ff" /><stop offset=".5" stop-color="#6da9f8" /><stop offset="1" stop-color="#5f94fb" />
            </linearGradient>
            <linearGradient id="neck" gradientUnits="userSpaceOnUse" x1="170" y1="320" x2="252" y2="330">
              <stop offset="0" stop-color="#5584f5" /><stop offset=".5" stop-color="#6099fb" /><stop offset="1" stop-color="#70b0ff" stop-opacity="0" />
            </linearGradient>
            <linearGradient id="under" gradientUnits="userSpaceOnUse" x1="215" y1="385" x2="226" y2="450">
              <stop offset="0" stop-color="#5e90fb" /><stop offset=".5" stop-color="#4f7cf8" /><stop offset="1" stop-color="#4364d2" />
            </linearGradient>
            <radialGradient id="shine"><stop offset="0" stop-color="#b7f3ff" /><stop offset="1" stop-color="#83c9ff" stop-opacity="0" /></radialGradient>
          </defs>
          <rect x="40" y="108" width="889" height="441" fill="url(#sky)" />

          <path d="M40 247Q47 237 58 231L230 292 262 289 400 281 693 265Q701 263 710 264 726 269 737 291 748 318 748 341 742 387 720 392L700 393 510 413 400 424 276 437 258 439Q245 440 233 443 200 452 174 468L150 480 40 470z" fill="url(#tube)" />
          <path d="M40 247Q47 237 58 231L230 292V300Q200 312 180 300L195 345 120 310 40 330z" fill="url(#hub)" />
          <path d="M180 285L232 296Q205 308 185 306 150 308 125 302z" fill="#5a86f2" />
          <path d="M125 301Q180 308 230 297L252 297Q262 340 262 388L197 392 178 340z" fill="url(#neck)" />
          <path d="M196 390Q230 385 262 384V438Q245 440 233 443 200 452 174 468L150 480z" fill="url(#under)" />
          <ellipse cx="70" cy="264" rx="24" ry="12" fill="url(#shine)" transform="rotate(-38 70 264)" />

          <path d="M40 166L58 178 113 202 201 238Q220 247 240 250 262 250 273 237L291 276Q284 290 250 295 232 296 212 291L183 280 40 222z" fill="url(#slab)" />
          <path d="M40 166Q48 166 122 196L200 228Q222 238 240 237 266 235 272 237 275 241 262 248 240 252 222 246L113 202 58 179z" fill="#5a81ee" />
          <path d="M222 236Q232 239 240 237 266 235 272 237 275 241 262 248 240 251 226 247z" fill="#6b9ff5" />
          <g fill="none" stroke="#111" stroke-width="1.500">
            <path d="M40 166Q48 166 122 196L200 228Q222 238 240 237 266 235 272 237 275 241 262 248 240 252 222 246L113 202 58 179 40 166" />
            <path d="M273 237L289 276M202 238L183 281M196 227L202 238M83 283L81 298" />
            <path d="M40 222L96 246 183 281 205 289Q220 296 240 295 268 294 284 284 289 281 291 276" stroke-width="2" />
            <ellipse cx="85" cy="398" rx="112" ry="99" fill="#6ca3fe" stroke-width="2" />
            <path d="M197 390Q230 385 278 381L400 370 527 359 747 341" stroke-width="2" />
            <path d="M748 325L830 318" stroke-width="2" />
          </g>
          <g fill="none" stroke="#263b57" stroke-width=".9">
            <path d="M40 195L90 218 192 259Q220 270 245 273 272 273 288 265M58 178L40 221M113 202L95 246M233 250L227 293M235 250L231 294M253 249L257 293M267 247L277 287" />
            <path d="M45 168L122 198 200 233 230 243Q252 244 272 239M122 196L119 203M216 236L222 242M226 238L238 249M243 238L254 248" />
            <path d="M40 247Q47 237 58 231M85 284C98 270 112 268 126 268 155 268 175 280 185 303M126 266L127 287M139 288L137 307" />
            <path d="M81 298L98 497M40 403L197 390M226 303Q225 350 206 388L233 443M178 340Q210 360 260 364M187 440Q215 410 261 398M226 303L252 304" />
            <path d="M517 299Q527 330 527 363 525 402 510 413M174 468Q200 452 233 443 245 440 258 439" />
          </g>
          <path d="M252 297C257 325 260 350 261 364 263 390 263 415 259 439M272 313C278 345 279 370 279 400 279 420 278 430 276 437M722 286Q733 315 733 340 731 390 702 393" fill="none" stroke="#b414c8" stroke-width="1.800" />
          <path d="M702 265Q726 261 740 296 748 320 748 341 742 386 720 391L714 391" fill="none" stroke="#7d1a90" stroke-width="2" />
          <path d="M702 265Q726 261 740 296 748 320 748 341 742 386 720 391L714 391" fill="none" stroke="#111" stroke-width="2" stroke-dasharray="7 2" />
          <g fill="none" stroke="#e39a2e" stroke-width="1.700">
            <path d="M263 288L400 281 684 265Q702 264 713 275L722 286 517 299 400 306 272 314 266 297 265 288M263 288L260 297 330 293 400 290 677 274Q682 268 693 266" />
          </g>
          <path d="M263 287L690 264" fill="none" stroke="#6a5730" stroke-width=".7" />
          <rect x="262" y="293" width="6" height="6" fill="none" stroke="#36df4d" stroke-width="1.400" />

          <g fill="none">
            <path d="M457 287Q461 327 499 328" stroke="#e0293b" stroke-width="1.300" />
            <path d="M485 282Q486 306 499 328" stroke="#2bdd5a" stroke-width="1.300" />
            <path d="M456 286Q448 282 484 278" stroke="#2638d8" stroke-width="1.300" />
            <path d="M484 278L499 284 478 299" stroke="#fff" stroke-dasharray="1 2" />
            <circle cx="478" cy="299" r="3" stroke="#dceaff" />
            <rect x="482" y="276" width="4" height="4" stroke="#e0252c" />
            <path d="M499.500 280V245" stroke="#2424e8" stroke-width="1.600" />
            <rect x="497.500" y="290" width="4" height="4" stroke="#2424e8" stroke-width="1.200" />
            <path d="M504 284L543 282" stroke="#15d721" stroke-width="1.500" />
            <path d="M502 286L514 290" stroke="#e32424" stroke-width="1.500" />
            <g stroke="#7887a0"><ellipse cx="444" cy="282" rx="2.500" ry="8" /><ellipse cx="444" cy="282" rx="8" ry="2.500" /></g>
            <path d="M444 276v12M438 282h12" stroke="#fff" stroke-dasharray="2 1" />
            <path d="M520.500 249v12M526 249v12M531.500 249v12" stroke="#6c82c8" /><path d="M520 249.500h12M520 255h12M520 260.500h12" stroke="#7be7a2" />
            <path d="M66.500 524V502" stroke="#3948d9" /><path d="M66 524L88 520" stroke="#40dd70" /><path d="M66 524L74 526" stroke="#df3a3a" />
          </g>
          <path d="M499.500 234l3 11h-6z" fill="#2424e8" /><circle cx="499.500" cy="262" r="2.600" fill="#2424e8" />
          <path d="M537 279l8 3-8 3zM519 280l7 3-7 3z" fill="#15d721" /><circle cx="507" cy="287" r="2.600" fill="#e32424" /><path d="M512 287l6 4-5 2z" fill="#e32424" />
          <circle cx="499.500" cy="284" r="4.200" fill="#fff" stroke="#111" stroke-width="1.400" />
          <g class="axes"><text x="66" y="502" fill="#2638d8">z</text><text x="87" y="522" fill="#34d95a">y</text><text x="74" y="530" fill="#e02b2b">x</text></g>
        </svg>
        <div class="view-name"><button>透视图</button><button aria-label="视图菜单"><svg viewBox="0 0 6 4"><path d="M0 0h6L3 4z" /></svg></button></div>
      </section>

      <aside class="dock">
        <div class="grip" />
        <div class="dock-body">
          <section class="panel">
            <div class="layer-tools"><button v-for="i in layerTools" :key="i[0]" :aria-label="i[0]"><svg viewBox="0 0 16 16" v-html="i[1]" /></button></div>
            <table class="layers">
              <colgroup><col><col class="c"><col class="c"><col class="c"><col class="c"><col class="m"></colgroup>
              <thead><tr><th>图层</th><th /><th /><th /><th /><th>材质</th></tr></thead>
              <tbody>
                <tr v-for="l in layers" :key="l.name" :class="{ current: l.current, latin: isLatin(l.name) }">
                  <td>{{ l.name }}</td>
                  <td><svg v-if="l.current" viewBox="0 0 10 10"><path d="M1 5l3 3 5-6" fill="none" stroke="#333" /></svg></td>
                  <td><svg v-if="l.lamp" viewBox="0 0 10 10"><path d="M5 1q3 0 3 3L6.500 6.500v2h-3v-2L2 4q0-3 3-3z" :fill="l.lamp === 'on' ? '#fff29a' : '#6d9be8'" :stroke="l.lamp === 'on' ? '#a89530' : '#3c578c'" stroke-width=".8" /></svg></td>
                  <td><svg v-if="l.lamp" viewBox="0 0 10 10"><path d="M1 5h6v4H1z" fill="#ffe14d" stroke="#6c5a13" /><path d="M6 5V3q0-2 2-2t2 3" fill="none" stroke="#555" /></svg></td>
                  <td><svg viewBox="0 0 10 10"><rect x="1" y="1" width="8" height="8" :fill="l.color" stroke="#333" stroke-width=".6" /></svg></td>
                  <td><svg viewBox="0 0 10 10"><circle cx="5" cy="5" r="3" fill="#fafafa" /></svg></td>
                </tr>
              </tbody>
            </table>
            <div class="hscroll"><div class="thumb" /></div>
          </section>
          <div class="vtabs" role="tablist">
            <button v-for="(t, n) in sideTabs" :key="n" role="tab" class="vtab" :class="{ active: t.active }">
              <svg class="plate" viewBox="0 0 17 44" preserveAspectRatio="none"><path :d="t.active ? 'M0 .5H16.500V27L0 43.500' : 'M.5 9L9 .5H16.500V24L.5 40z'" /></svg>
              <svg class="pic" viewBox="0 0 16 16" v-html="t.icon" />
              <span>{{ t.label }}</span>
            </button>
            <svg class="cog" viewBox="0 0 10 10"><circle cx="5" cy="5" r="3.500" /><circle cx="5" cy="5" r="1.500" /></svg>
          </div>
        </div>
      </aside>
    </main>

    <div class="snaps">
      <label v-for="s in snaps" :key="s.label" :class="{ wide: s.round }"><input v-model="s.on" type="checkbox" :class="{ round: s.round }">{{ s.label }}</label>
    </div>

    <footer class="status">
      <div v-for="c in readouts" :key="c.label" class="cell" :class="{ latin: isLatin(c.label) }" :style="{ flexBasis: c.size + 'px' }">{{ c.label }}</div>
      <div class="cell layer-cell"><i />默认</div>
      <button v-for="c in toggles" :key="c.label" class="cell" :class="{ on: c.on }" :style="{ flexBasis: c.size + 'px' }">{{ c.label }}</button>
      <div class="cell memory">可用的物理内存: <span>8969 MB</span></div>
    </footer>
  </div>
</template>

<style>
body { margin: 0; }
</style>

<style scoped>
.app { min-height: 100vh; display: flex; flex-direction: column; background: #dfe3ea; color: #222; font: 7px/10px "Noto Sans", "Noto Sans CJK SC", sans-serif; overflow: hidden; }
* { box-sizing: border-box; }
button { font: inherit; color: inherit; background: none; border: 0; padding: 0; margin: 0; white-space: nowrap; }
svg { display: block; }
.latin { font-size: 8px; }

.title { height: 13px; display: flex; align-items: center; gap: 3px; padding-left: 1px; background: #fff; }
.logo { width: 9px; height: 9px; }
h1 { margin: 0; font-size: 7px; font-weight: 400; flex: 1; }
.window-buttons { display: flex; gap: 18px; padding-right: 11px; }
.window-buttons svg { width: 7px; height: 7px; fill: none; stroke: #333; stroke-width: 1; }
.menu { height: 11px; display: flex; align-items: center; gap: 8px; padding-left: 4px; background: #fff; }

.command { border-top: 2px solid #e0e0e2; padding-left: 4px; background: #dfe3ea; color: #252a70; }
.history { background: #fff; padding: 2px 0 0 1px; border-right: 9px solid #f0f0f0; }
.history p { margin: 0; line-height: 13px; }
.prompt { display: flex; align-items: center; height: 12px; padding-left: 1px; background: #fff; border-top: 1px solid #aaa; }
.prompt label { font-weight: 500; }
.prompt input { flex: 1; margin-left: 2px; height: 9px; border: 0; border-left: 1px solid #333; padding: 0; outline: 0; font: inherit; color: inherit; }
.spin { display: flex; flex-direction: column; gap: 1px; width: 8px; }
.spin button { height: 5px; display: grid; place-items: center; background: #eee; border: 1px solid #aaa; }
.spin svg { width: 4px; height: 2px; }

.tabbar { display: flex; height: 20px; padding: 4px 0 0 4px; background: linear-gradient(#d4d9e1, #dfe3ea 4px); }
.tabs { display: flex; flex: 1; min-width: 0; overflow: hidden; background: #fff; border-bottom: 1px solid #bbc0ca; }
.tab { position: relative; flex: 0 1 0; min-width: 0; overflow: hidden; }
.tab span { position: relative; }
.tab::after { content: ""; position: absolute; right: 0; top: 0; border-top: 3px solid #d7dbe3; border-left: 3px solid transparent; }
.tab.active { background: #e8ebf0; border-right: 1px solid #b5b9c2; border-top: 1px solid #c2c6ce; overflow: visible; }
.slant { position: absolute; left: -8px; top: -1px; width: 14px; height: 16px; }
.slant .blank { fill: #fff; }
.slant .fill { fill: #e8ebf0; }
.slant .edge { fill: none; stroke: #b9bdc7; }
.tab.active::after { display: none; }
.overflow { width: 9px; font-size: 9px; font-weight: 700; background: #ccd3e4; }
.gear { width: 9px; }
.gear svg, .cog { width: 9px; height: 9px; fill: none; stroke: #a5abb8; }

.toolbar { display: flex; height: 22px; padding: 2px 61px 0 4px; background: linear-gradient(#eef0f4, #dde1e8); align-items: flex-start; }
.group { display: flex; min-width: 0; }
.group button { flex: 1; display: grid; place-items: center; min-width: 0; }
.group svg { width: 14px; height: 15px; }
.group-main { flex: 788; }
.group-body { flex: 161; border-left: 1px solid #c3c8d1; padding-left: 2px; }
.group-extra { flex: 66; border-left: 1px solid #c3c8d1; padding-left: 2px; }

.workspace { flex: 1; display: flex; min-height: 0; }
.grip { height: 2px; background: #c9cdd5; }
.side { width: 40px; padding: 2px 4px 12px 0; display: flex; flex-direction: column; background: #e1e5eb; }
.palette { flex: 1; display: grid; grid-template-columns: 16px 16px; grid-auto-rows: 1fr; }
.palette button { display: grid; place-items: center; min-height: 0; }
.palette svg { width: 13px; height: 13px; }
.palette .next { font-size: 9px; font-weight: 700; padding-left: 6px; }

.view { position: relative; flex: 1; min-width: 0; border-bottom: 1px solid #8ea5cc; }
.scene { position: absolute; inset: 0; width: 100%; height: 100%; }
.axes { font: 9px "Noto Sans", sans-serif; }
.view-name { position: absolute; left: 0; top: 0; height: 12px; display: flex; background: #1b87cb; color: #0c1c2e; }
.view-name button { padding: 0 4px; font-weight: 500; }
.view-name button + button { border-left: 1px solid #0f5b8e; padding: 0 2px; }
.view-name svg { width: 4px; height: 3px; fill: #10243a; }

.dock { width: 151px; padding: 2px 0 0 4px; display: flex; flex-direction: column; background: #dfe3ea; }
.dock-body { flex: 1; display: flex; margin-top: 1px; }
.panel { flex: 1; display: flex; flex-direction: column; background: #fff; border: 1px solid #b9bec8; border-width: 1px 0 1px 1px; }
.layer-tools { display: flex; height: 22px; padding: 0 0 0 2px; }
.layer-tools button { flex: 1; display: grid; place-items: center; }
.layer-tools svg { width: 9px; height: 9px; }
.layers { width: 100%; border-collapse: collapse; table-layout: fixed; }
.layers .c { width: 10px; }
.layers .m { width: 18px; }
.layers th, .layers td { height: 12px; padding: 0; text-align: left; font-weight: 400; line-height: 10px; border-bottom: 1px solid #f0f0f0; }
.layers th { height: 12px; border-right: 1px solid #eee; }
.layers th:first-child { padding-left: 2px; }
.layers th:last-child { padding-left: 2px; border-right: 0; white-space: nowrap; }
.layers td:first-child { padding-left: 4px; white-space: nowrap; }
.layers .current td:first-child { font-weight: 700; }
.layers svg { width: 9px; height: 9px; margin: 0 auto; }
.hscroll { margin-top: auto; height: 9px; padding: 4px 9px; background: #f0f0f0; }
.thumb { width: 40%; height: 1px; background: #777; }

.vtabs { position: relative; width: 18px; padding-bottom: 10px; display: flex; flex-direction: column; border-left: 1px solid #b9bec8; }
.vtab { position: relative; flex: 1; display: flex; flex-direction: column; align-items: center; gap: 2px; padding-top: 3px; min-height: 0; }
.vtab .plate { position: absolute; left: -1px; top: -1px; width: 18px; height: 44px; fill: #fff; stroke: #b9bec8; }
.vtab .pic { position: relative; flex: none; width: 9px; height: 9px; }
.vtab span { position: relative; font-size: 7px; line-height: 9px; writing-mode: vertical-rl; }
.vtab.active span { font-weight: 700; }
.cog { position: absolute; right: 0; bottom: 0; }

.snaps { height: 20px; display: flex; align-items: center; gap: 4px; margin-left: 2px; padding: 2px 0 0 2px; border-left: 1px solid #c8ccd4; }
.snaps label { display: flex; align-items: center; gap: 1px; }
.snaps .wide { margin-right: 9px; }
.snaps input { appearance: none; display: grid; place-items: center; width: 9px; height: 8px; margin: 0; background: #fff; border: 1px solid #8c9098; border-radius: 2px; }
.snaps input:checked { background: #0f62b4; border-color: #0f62b4; }
.snaps input:checked::after { content: ""; width: 4px; height: 2px; border: 1px solid #fff; border-width: 0 0 1px 1px; transform: rotate(-45deg); }
.snaps .round { width: 8px; border: 1px solid #eef0f3; border-radius: 50%; }

.status { display: flex; height: 11px; border-top: 1px solid #c2c7d0; overflow: hidden; }
.cell { flex: 0 0 auto; display: flex; align-items: center; justify-content: center; border-right: 1px solid #bcc2cc; white-space: nowrap; }
.layer-cell { flex-basis: 140px; justify-content: flex-start; gap: 1px; padding-left: 2px; }
.layer-cell i { width: 8px; height: 8px; background: #000; }
.cell.on { font-weight: 700; color: #000; background: #e6f1f7; }
.memory { flex: 1; justify-content: flex-start; padding-left: 2px; gap: 2px; border: 0; }
.memory span { font-size: 8px; }
</style>
